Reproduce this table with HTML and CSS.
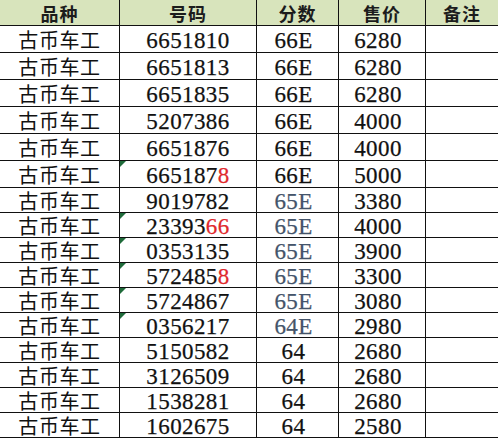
FILE: index.html
```html
<!DOCTYPE html>
<html lang="zh">
<head>
<meta charset="utf-8">
<title>古币车工</title>
<link rel="stylesheet" href="styles.css">
</head>
<body>
<div class="sheet">
  <div class="cell head">品种</div><div class="cell head">号码</div><div class="cell head">分数</div><div class="cell head">售价</div><div class="cell head last">备注</div>

  <div class="cell name">古币车工</div><div class="cell num">6651810</div><div class="cell num score">66E</div><div class="cell num price">6280</div><div class="cell last"></div>
  <div class="cell name">古币车工</div><div class="cell num">6651813</div><div class="cell num score">66E</div><div class="cell num price">6280</div><div class="cell last"></div>
  <div class="cell name">古币车工</div><div class="cell num">6651835</div><div class="cell num score">66E</div><div class="cell num price">6280</div><div class="cell last"></div>
  <div class="cell name">古币车工</div><div class="cell num">5207386</div><div class="cell num score">66E</div><div class="cell num price">4000</div><div class="cell last"></div>
  <div class="cell name">古币车工</div><div class="cell num">6651876</div><div class="cell num score">66E</div><div class="cell num price">4000</div><div class="cell last"></div>
  <div class="cell name">古币车工</div><div class="cell num flag">665187<span class="red">8</span></div><div class="cell num score">66E</div><div class="cell num price">5000</div><div class="cell last"></div>

  <div class="cell name">古币车工</div><div class="cell num">9019782</div><div class="cell num score blue">65E</div><div class="cell num price">3380</div><div class="cell last"></div>
  <div class="cell name">古币车工</div><div class="cell num flag">23393<span class="red">66</span></div><div class="cell num score blue">65E</div><div class="cell num price">4000</div><div class="cell last"></div>
  <div class="cell name">古币车工</div><div class="cell num flag">0353135</div><div class="cell num score blue">65E</div><div class="cell num price">3900</div><div class="cell last"></div>
  <div class="cell name">古币车工</div><div class="cell num flag">572485<span class="red">8</span></div><div class="cell num score blue">65E</div><div class="cell num price">3300</div><div class="cell last"></div>
  <div class="cell name">古币车工</div><div class="cell num flag">5724867</div><div class="cell num score blue">65E</div><div class="cell num price">3080</div><div class="cell last"></div>
  <div class="cell name">古币车工</div><div class="cell num flag">0356217</div><div class="cell num score blue">64E</div><div class="cell num price">2980</div><div class="cell last"></div>
  <div class="cell name">古币车工</div><div class="cell num">5150582</div><div class="cell num score">64</div><div class="cell num price">2680</div><div class="cell last"></div>
  <div class="cell name">古币车工</div><div class="cell num">3126509</div><div class="cell num score">64</div><div class="cell num price">2680</div><div class="cell last"></div>
  <div class="cell name">古币车工</div><div class="cell num">1538281</div><div class="cell num score">64</div><div class="cell num price">2680</div><div class="cell last"></div>
  <div class="cell name">古币车工</div><div class="cell num">1602675</div><div class="cell num score">64</div><div class="cell num price">2580</div><div class="cell last"></div>
</div>
</body>
</html>
```

FILE: styles.css
```css
* { box-sizing: border-box; }

html, body {
  margin: 0;
  padding: 0;
  background: #ffffff;
}

.sheet {
  display: grid;
  grid-template-columns: 120px 137px 82px 87px 72px;
  grid-template-rows: 26px repeat(6, 27px) repeat(10, 25px);
  width: 498px;
}

.cell {
  position: relative;
  display: flex;
  align-items: center;
  justify-content: center;
  border-right: 1px solid #111;
  border-bottom: 1px solid #111;
  color: #111;
  white-space: nowrap;
  line-height: 1;
}

.cell.last { border-right: none; }

.head {
  background: #d8e4bc;
  font-family: "Noto Sans CJK SC", sans-serif;
  font-weight: 700;
  font-size: 18px;
  letter-spacing: 1px;
  color: #1c1c1c;
  padding-top: 1px;
}

.name {
  font-family: "Noto Sans CJK SC", sans-serif;
  font-size: 20px;
  letter-spacing: 0.6px;
  padding-top: 1px;
}

.num {
  font-family: "Liberation Serif", "Times New Roman", serif;
  font-size: 23px;
  letter-spacing: 0.4px;
  padding-top: 2px;
  -webkit-text-stroke: 0.25px #111;
}

.score, .price { padding-right: 8px; }

.blue { color: #44546a; -webkit-text-stroke-color: #44546a; }

.red { color: #e0282c; -webkit-text-stroke-color: #e0282c; }

.flag::before {
  content: "";
  position: absolute;
  left: 0;
  top: 0;
  border-top: 6px solid #1f6b3a;
  border-right: 6px solid transparent;
}
```
